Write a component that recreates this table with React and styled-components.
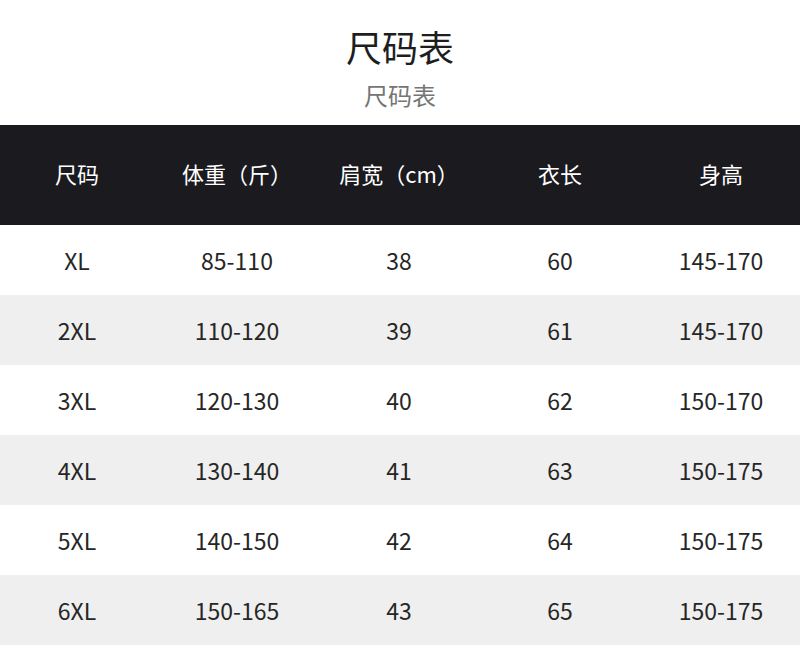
import styled, { createGlobalStyle } from "styled-components";

const GlobalStyle = createGlobalStyle`
  html, body {
    margin: 0;
    padding: 0;
    background: #ffffff;
  }
  body {
    font-family: "Noto Sans CJK SC", "Noto Sans", sans-serif;
  }
`;

const Page = styled.div`
  width: 800px;
  height: 650px;
  overflow: hidden;
  background: #ffffff;
`;

const Intro = styled.div`
  height: 125px;
  display: flex;
  flex-direction: column;
  align-items: center;
`;

const Title = styled.h1`
  margin: 28px 0 0;
  font-size: 36px;
  line-height: 36px;
  font-weight: 400;
  color: #1e1e1e;
`;

const Subtitle = styled.h2`
  margin: 19px 0 0;
  font-size: 24px;
  line-height: 24px;
  font-weight: 400;
  color: #757575;
`;

const Row = styled.div`
  display: grid;
  grid-template-columns: 154px 166px 158px 164px 158px;
  height: ${({ $head }) => ($head ? "100px" : "70px")};
  background: ${({ $head, $shaded }) =>
    $head ? "#1b1a1f" : $shaded ? "#efefef" : "#ffffff"};
`;

const Cell = styled.div`
  display: flex;
  align-items: center;
  justify-content: center;
  padding-bottom: ${({ $head }) => ($head ? "5px" : "0")};
  font-size: ${({ $head }) => ($head ? "22px" : "23px")};
  color: ${({ $head }) => ($head ? "#ffffff" : "#262626")};
  white-space: nowrap;
`;

const headers = ["尺码", "体重（斤）", "肩宽（cm）", "衣长", "身高"];

const rows = [
  ["XL", "85-110", "38", "60", "145-170"],
  ["2XL", "110-120", "39", "61", "145-170"],
  ["3XL", "120-130", "40", "62", "150-170"],
  ["4XL", "130-140", "41", "63", "150-175"],
  ["5XL", "140-150", "42", "64", "150-175"],
  ["6XL", "150-165", "43", "65", "150-175"],
];

export default function App() {
  return (
    <Page>
      <GlobalStyle />
      <Intro>
        <Title>尺码表</Title>
        <Subtitle>尺码表</Subtitle>
      </Intro>
      <Row $head>
        {headers.map((h) => (
          <Cell key={h} $head>
            {h}
          </Cell>
        ))}
      </Row>
      {rows.map((r, i) => (
        <Row key={r[0]} $shaded={i % 2 === 1}>
          {r.map((v, j) => (
            <Cell key={j}>{v}</Cell>
          ))}
        </Row>
      ))}
    </Page>
  );
}
